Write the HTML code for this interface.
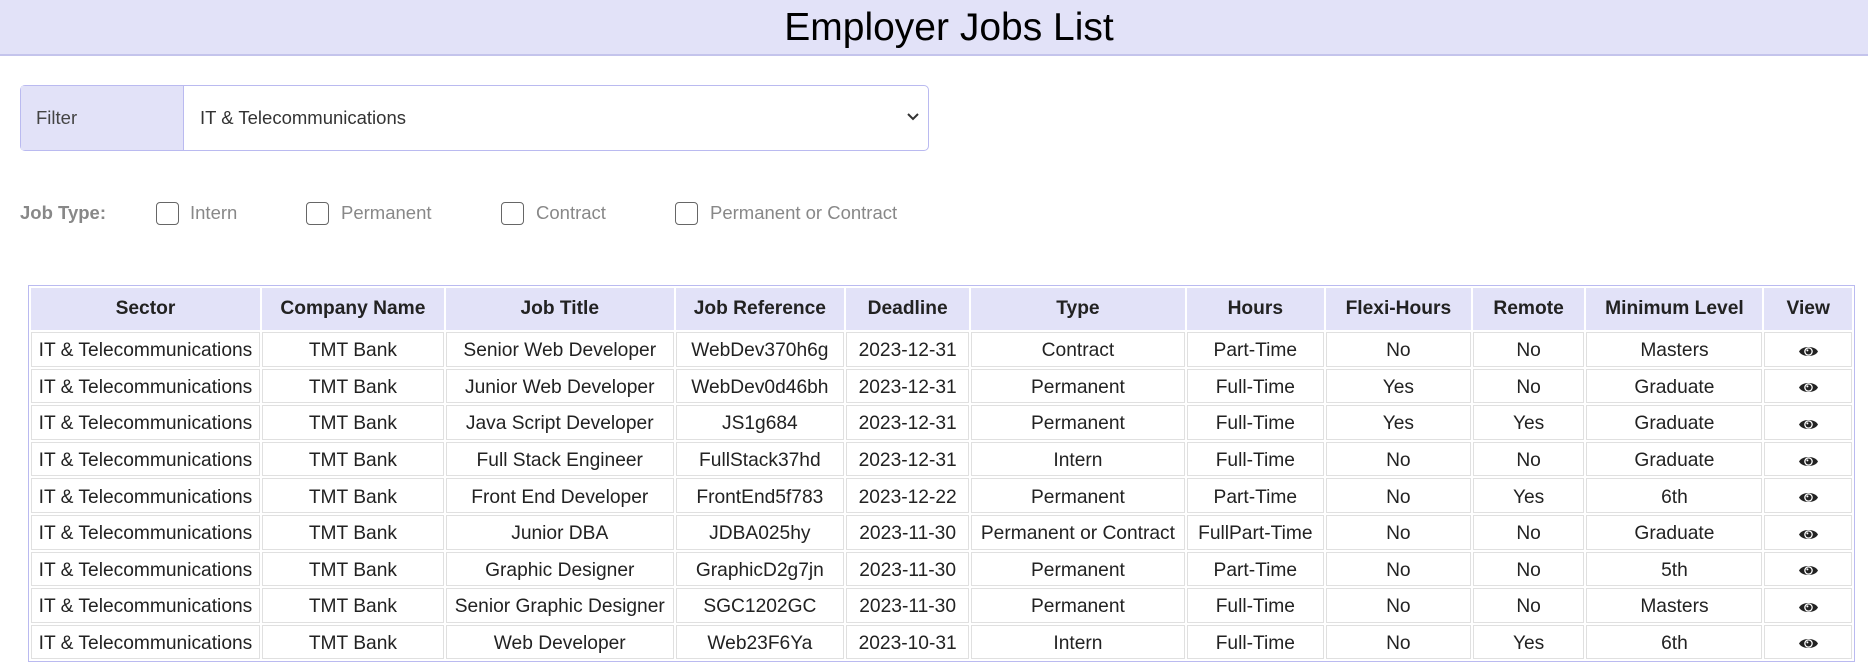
<!DOCTYPE html>
<html><head><meta charset="utf-8"><style>
*{box-sizing:border-box;margin:0;padding:0}
body{width:1868px;height:663px;overflow:hidden;background:#fff;font-family:"Liberation Sans",Arial,sans-serif;position:relative}
.hdr{position:absolute;left:0;top:0;width:1868px;height:56px;background:#e2e2f8;border-bottom:2px solid #c4c4ec;text-align:center;font-size:39px;line-height:56px;color:#000;padding-left:30px}
.filter{position:absolute;left:20px;top:85px;width:909px;height:66px;border:1.5px solid #babaf0;border-radius:5px;display:flex;font-size:18.5px;color:#333}
.filter .lab{width:163px;background:#e2e2f8;border-right:1.5px solid #babaf0;line-height:63px;padding-left:15px;color:#444}
.filter .sel{flex:1;line-height:63px;padding-left:16px;position:relative}
.filter .sel svg{position:absolute;right:8px;top:26px}
.jt{position:absolute;top:202px;font-size:18.5px;color:#888}
.cb{position:absolute;top:202px;width:23px;height:23px;border:1.5px solid #666;border-radius:4px;background:#fff}
table{position:absolute;left:28px;top:285px;width:1827px;border:1.5px solid #babaf0;border-spacing:2px;font-size:19.2px;color:#222}
td,th{border:1.5px solid #e0e0e0;text-align:center;white-space:nowrap;height:34.6px;padding:0}
td{padding-top:4px}
th{background:#e2e2f8;height:42px;font-weight:bold;border-color:#e2e2f8}
</style></head><body>
<div class="hdr">Employer Jobs List</div>
<div class="filter"><div class="lab">Filter</div><div class="sel">IT &amp; Telecommunications<svg width="14" height="10" viewBox="0 0 14 10"><path d="M2 2l5 5 5-5" fill="none" stroke="#333" stroke-width="2"/></svg></div></div>
<div class="jt" style="left:20px;font-weight:bold;color:#888">Job Type:</div>
<div class="cb" style="left:156px"></div><div class="jt" style="left:190px">Intern</div>
<div class="cb" style="left:306px"></div><div class="jt" style="left:341px">Permanent</div>
<div class="cb" style="left:501px"></div><div class="jt" style="left:536px">Contract</div>
<div class="cb" style="left:675px"></div><div class="jt" style="left:710px">Permanent or Contract</div>
<table>
<colgroup><col style="width:230px"><col style="width:185px"><col style="width:229px"><col style="width:171px"><col style="width:125px"><col style="width:215px"><col style="width:139px"><col style="width:148px"><col style="width:115px"><col style="width:179px"><col style="width:91px"></colgroup>
<tr><th>Sector</th><th>Company Name</th><th>Job Title</th><th>Job Reference</th><th>Deadline</th><th>Type</th><th>Hours</th><th>Flexi-Hours</th><th>Remote</th><th>Minimum Level</th><th>View</th></tr>
<tr><td>IT &amp; Telecommunications</td><td>TMT Bank</td><td>Senior Web Developer</td><td>WebDev370h6g</td><td>2023-12-31</td><td>Contract</td><td>Part-Time</td><td>No</td><td>No</td><td>Masters</td><td>E</td></tr>
<tr><td>IT &amp; Telecommunications</td><td>TMT Bank</td><td>Junior Web Developer</td><td>WebDev0d46bh</td><td>2023-12-31</td><td>Permanent</td><td>Full-Time</td><td>Yes</td><td>No</td><td>Graduate</td><td>E</td></tr>
<tr><td>IT &amp; Telecommunications</td><td>TMT Bank</td><td>Java Script Developer</td><td>JS1g684</td><td>2023-12-31</td><td>Permanent</td><td>Full-Time</td><td>Yes</td><td>Yes</td><td>Graduate</td><td>E</td></tr>
<tr><td>IT &amp; Telecommunications</td><td>TMT Bank</td><td>Full Stack Engineer</td><td>FullStack37hd</td><td>2023-12-31</td><td>Intern</td><td>Full-Time</td><td>No</td><td>No</td><td>Graduate</td><td>E</td></tr>
<tr><td>IT &amp; Telecommunications</td><td>TMT Bank</td><td>Front End Developer</td><td>FrontEnd5f783</td><td>2023-12-22</td><td>Permanent</td><td>Part-Time</td><td>No</td><td>Yes</td><td>6th</td><td>E</td></tr>
<tr><td>IT &amp; Telecommunications</td><td>TMT Bank</td><td>Junior DBA</td><td>JDBA025hy</td><td>2023-11-30</td><td>Permanent or Contract</td><td>FullPart-Time</td><td>No</td><td>No</td><td>Graduate</td><td>E</td></tr>
<tr><td>IT &amp; Telecommunications</td><td>TMT Bank</td><td>Graphic Designer</td><td>GraphicD2g7jn</td><td>2023-11-30</td><td>Permanent</td><td>Part-Time</td><td>No</td><td>No</td><td>5th</td><td>E</td></tr>
<tr><td>IT &amp; Telecommunications</td><td>TMT Bank</td><td>Senior Graphic Designer</td><td>SGC1202GC</td><td>2023-11-30</td><td>Permanent</td><td>Full-Time</td><td>No</td><td>No</td><td>Masters</td><td>E</td></tr>
<tr><td>IT &amp; Telecommunications</td><td>TMT Bank</td><td>Web Developer</td><td>Web23F6Ya</td><td>2023-10-31</td><td>Intern</td><td>Full-Time</td><td>No</td><td>Yes</td><td>6th</td><td>E</td></tr>
</table>
<script>
document.querySelectorAll('td:last-child').forEach(function(t){t.innerHTML='<svg width="21" height="15" viewBox="0 0 21 15" style="vertical-align:middle"><path d="M1 7.5C4 1.5 17 1.5 20 7.5C17 13.5 4 13.5 1 7.5Z" fill="#222"/><circle cx="10.5" cy="7.5" r="4.3" fill="#fff"/><circle cx="10.5" cy="7.5" r="3" fill="#222"/><circle cx="9.4" cy="6.4" r="1" fill="#fff"/></svg>';});
</script>
</body></html>
